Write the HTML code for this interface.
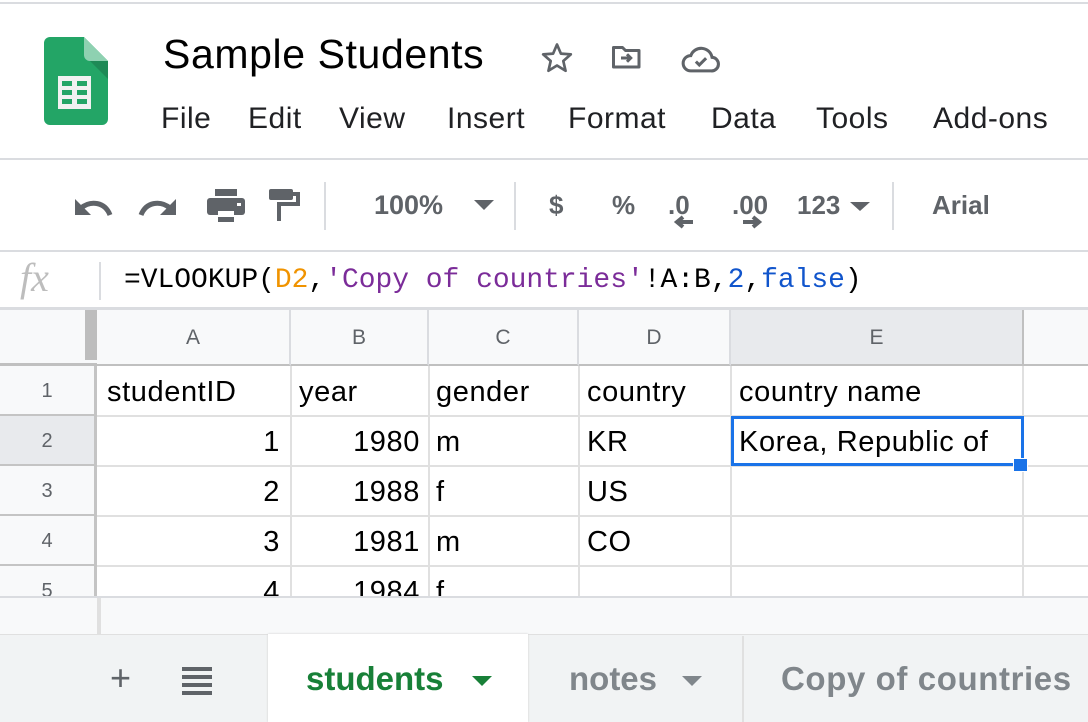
<!DOCTYPE html>
<html><head><meta charset="utf-8"><style>
*{margin:0;padding:0;box-sizing:border-box}
body{width:1088px;height:722px;overflow:hidden;background:#fff;font-family:"Liberation Sans",Arial,sans-serif;position:relative}
.a{position:absolute}
.menu span{position:absolute;top:102px;font-size:30px;letter-spacing:0.5px;color:#202124}
.tb{color:#5f6368;font-weight:bold;font-size:26px;position:absolute}
.ch{position:absolute;top:310px;height:56px;background:#f8f9fa;border-right:2px solid #dadce0;border-bottom:2px solid #c0c0c0;color:#5f6368;font-size:21px;text-align:center;line-height:56px}
.rh{position:absolute;left:0;width:97px;background:#f8f9fa;border-right:3px solid #c4c4c4;border-bottom:2px solid #c4c4c4;color:#5f6368;font-size:20px;text-align:center;line-height:50px}
.c{position:absolute;font-size:29px;letter-spacing:0.6px;color:#000;line-height:50px;white-space:nowrap}
.vl{position:absolute;top:366px;height:230px;width:2px;background:#e0e0e0}
.hl{position:absolute;left:97px;right:0;height:2px;background:#e0e0e0}
</style></head><body>
<div class="a" style="left:0;top:2px;width:1088px;height:2px;background:#dadce0"></div>
<svg class="a" style="left:44px;top:37px" width="64" height="88" viewBox="0 0 64 88">
<path d="M6 0H40L64 24V82a6 6 0 0 1-6 6H6a6 6 0 0 1-6-6V6a6 6 0 0 1 6-6z" fill="#23a566"/>
<path d="M40 0L64 24H46a6 6 0 0 1-6-6z" fill="#8ed1b1"/>
<path d="M46 24L64 42V24z" fill="#1e8a56"/>
<rect x="14" y="39" width="33" height="33" fill="#f1f1f1"/>
<g fill="#23a566"><rect x="18" y="44" width="10" height="5"/><rect x="33" y="44" width="10" height="5"/><rect x="18" y="53" width="10" height="5"/><rect x="33" y="53" width="10" height="5"/><rect x="18" y="62" width="10" height="5"/><rect x="33" y="62" width="10" height="5"/></g>
</svg>
<div class="a" style="left:163px;top:31px;font-size:41px;letter-spacing:0.6px;color:#000">Sample Students</div>
<svg class="a" style="left:537px;top:40px" width="40" height="36" viewBox="0 0 24 24"><path d="M12 3l2.6 6.1 6.6.5-5 4.4 1.5 6.5L12 17l-5.7 3.5 1.5-6.5-5-4.4 6.6-.5z" fill="none" stroke="#5f6368" stroke-width="1.8" stroke-linejoin="round"/></svg>
<svg class="a" style="left:607px;top:40px" width="40" height="36" viewBox="0 0 24 24"><path d="M3 5h6l2 2h9v11H3z" fill="none" stroke="#5f6368" stroke-width="2" stroke-linejoin="round"/><path d="M8 12h6M12 9.5l2.5 2.5-2.5 2.5" fill="none" stroke="#5f6368" stroke-width="2"/></svg>
<svg class="a" style="left:680px;top:42px" width="42" height="34" viewBox="0 0 24 20"><path d="M6 17h12a4 4 0 0 0 .5-8A6.5 6.5 0 0 0 6 8a4.5 4.5 0 0 0 0 9z" fill="none" stroke="#5f6368" stroke-width="1.8"/><path d="M9 11.5l2 2 4-4" fill="none" stroke="#5f6368" stroke-width="1.8"/></svg>
<div class="menu"><span style="left:161px">File</span><span style="left:248px">Edit</span><span style="left:339px">View</span><span style="left:447px">Insert</span><span style="left:568px">Format</span><span style="left:711px">Data</span><span style="left:816px">Tools</span><span style="left:933px">Add-ons</span></div>
<div class="a" style="left:0;top:158px;width:1088px;height:2px;background:#dadce0"></div>
<svg class="a" style="left:73px;top:190px" width="40" height="30" viewBox="0 0 40 30"><path d="M37 25C32 12 18 10 8 18" fill="none" stroke="#5f6368" stroke-width="5"/><path d="M2 9v16h16z" fill="#5f6368"/></svg>
<svg class="a" style="left:138px;top:190px" width="40" height="30" viewBox="0 0 40 30"><path d="M3 25C8 12 22 10 32 18" fill="none" stroke="#5f6368" stroke-width="5"/><path d="M38 9v16H22z" fill="#5f6368"/></svg>
<svg class="a" style="left:207px;top:188px" width="40" height="36" viewBox="0 0 40 36"><rect x="8" y="1" width="22" height="7" fill="#5f6368"/><rect x="0" y="10" width="38" height="17" rx="3" fill="#5f6368"/><rect x="11" y="21" width="16" height="12" fill="#fff"/><rect x="9" y="20" width="20" height="3" fill="#5f6368"/><rect x="11" y="29" width="16" height="5" fill="#5f6368"/><rect x="30" y="15" width="4" height="3" fill="#fff"/></svg>
<svg class="a" style="left:268px;top:188px" width="34" height="36" viewBox="0 0 34 36"><rect x="1" y="1" width="24" height="11" rx="2" fill="#5f6368"/><path d="M25 6h5v10H11v17" fill="none" stroke="#5f6368" stroke-width="4"/></svg>
<div class="a" style="left:324px;top:182px;width:2px;height:48px;background:#dadce0"></div>
<div class="tb" style="left:374px;top:190px;font-size:27px">100%</div>
<svg class="a" style="left:474px;top:200px" width="20" height="12"><path d="M0 0h20L10 10z" fill="#5f6368"/></svg>
<div class="a" style="left:514px;top:182px;width:2px;height:48px;background:#dadce0"></div>
<div class="tb" style="left:549px;top:190px">$</div>
<div class="tb" style="left:612px;top:190px">%</div>
<div class="tb" style="left:668px;top:190px">.0</div>
<svg class="a" style="left:673px;top:215px" width="22" height="14"><path d="M20 7H6M10 2L4 7l6 5" fill="none" stroke="#5f6368" stroke-width="4"/></svg>
<div class="tb" style="left:732px;top:190px">.00</div>
<svg class="a" style="left:741px;top:215px" width="22" height="14"><path d="M2 7h14M12 2l6 5-6 5" fill="none" stroke="#5f6368" stroke-width="4"/></svg>
<div class="tb" style="left:797px;top:190px">123</div>
<svg class="a" style="left:850px;top:202px" width="20" height="10"><path d="M0 0h20L10 9z" fill="#5f6368"/></svg>
<div class="a" style="left:892px;top:182px;width:2px;height:48px;background:#dadce0"></div>
<div class="tb" style="left:932px;top:190px">Arial</div>
<div class="a" style="left:0;top:250px;width:1088px;height:2px;background:#dadce0"></div>
<div class="a" style="left:20px;top:254px;font-family:'Liberation Serif',serif;font-style:italic;font-size:40px;color:#bdbdbd">fx</div>
<div class="a" style="left:99px;top:262px;width:2px;height:38px;background:#dadce0"></div>
<div class="a" style="left:124px;top:265px;font-family:'Liberation Mono',monospace;font-size:27.95px;color:#000;white-space:nowrap">=VLOOKUP(<span style="color:#f09300">D2</span>,<span style="color:#7b2c99">'Copy of countries'</span>!A:B,<span style="color:#1155cc">2</span>,<span style="color:#1155cc">false</span>)</div>
<div class="a" style="left:0;top:307px;width:1088px;height:3px;background:#dadce0"></div>
<div class="a" style="left:0;top:310px;width:97px;height:56px;background:#f8f9fa;border-bottom:3px solid #c0c0c0"></div>
<div class="a" style="left:85px;top:310px;width:12px;height:50px;background:#bdbdbd"></div>
<div class="ch" style="left:97px;width:194px">A</div>
<div class="ch" style="left:291px;width:138px">B</div>
<div class="ch" style="left:429px;width:150px">C</div>
<div class="ch" style="left:579px;width:152px">D</div>
<div class="ch" style="left:731px;width:293px;background:#e8eaed;border-right-color:#c0c0c0">E</div>
<div class="ch" style="left:1024px;width:64px;border-right:none"></div>
<div class="vl" style="left:290px"></div><div class="vl" style="left:428px"></div><div class="vl" style="left:578px"></div><div class="vl" style="left:730px"></div><div class="vl" style="left:1022px"></div>
<div class="hl" style="top:415px"></div><div class="hl" style="top:465px"></div><div class="hl" style="top:515px"></div><div class="hl" style="top:565px"></div>
<div class="rh" style="top:366px;height:50px">1</div>
<div class="rh" style="top:416px;height:50px;background:#e8eaed">2</div>
<div class="rh" style="top:466px;height:50px">3</div>
<div class="rh" style="top:516px;height:50px">4</div>
<div class="rh" style="top:566px;height:30px;border-bottom:none;line-height:50px;overflow:hidden">5</div>
<div class="c" style="left:107px;top:367px">studentID</div>
<div class="c" style="left:299px;top:367px">year</div>
<div class="c" style="left:436px;top:367px">gender</div>
<div class="c" style="left:587px;top:367px">country</div>
<div class="c" style="left:739px;top:367px">country name</div>
<div class="c" style="right:808px;top:417px">1</div><div class="c" style="right:668px;top:417px">1980</div><div class="c" style="left:436px;top:417px">m</div><div class="c" style="left:587px;top:417px">KR</div>
<div class="c" style="right:808px;top:467px">2</div><div class="c" style="right:668px;top:467px">1988</div><div class="c" style="left:436px;top:467px">f</div><div class="c" style="left:587px;top:467px">US</div>
<div class="c" style="right:808px;top:517px">3</div><div class="c" style="right:668px;top:517px">1981</div><div class="c" style="left:436px;top:517px">m</div><div class="c" style="left:587px;top:517px">CO</div>
<div class="a" style="left:97px;top:566px;width:991px;height:30px;overflow:hidden"><div class="c" style="right:808px;top:1px">4</div><div class="c" style="right:668px;top:1px">1984</div><div class="c" style="left:339px;top:1px">f</div></div>
<div class="c" style="left:739px;top:417px">Korea, Republic of</div>
<div class="a" style="left:731px;top:416px;width:293px;height:50px;border:3px solid #1a73e8"></div>
<div class="a" style="left:1013px;top:458px;width:15px;height:14px;background:#1a73e8;border:1px solid #fff"></div>
<div class="a" style="left:0;top:596px;width:1088px;height:38px;background:#f8f9fa;border-top:2px solid #dadce0"></div>
<div class="a" style="left:97px;top:598px;width:4px;height:36px;background:#e0e0e0"></div>
<div class="a" style="left:0;top:634px;width:1088px;height:88px;background:#f1f3f4;border-top:1px solid #e0e0e0"></div>
<div class="a" style="left:110px;top:657px;font-size:36px;color:#5f6368">+</div>
<svg class="a" style="left:182px;top:667px" width="30" height="28"><g fill="#5f6368"><rect y="0" width="30" height="4"/><rect y="8" width="30" height="4"/><rect y="16" width="30" height="4"/><rect y="24" width="30" height="4"/></g></svg>
<div class="a" style="left:268px;top:634px;width:260px;height:88px;background:#fff;box-shadow:0 0 2px #ccc"></div>
<div class="a" style="left:306px;top:660px;font-size:33px;font-weight:bold;color:#188038">students</div>
<svg class="a" style="left:472px;top:676px" width="20" height="10"><path d="M0 0h20L10 10z" fill="#188038"/></svg>
<div class="a" style="left:569px;top:660px;font-size:33px;font-weight:bold;color:#80868b">notes</div>
<svg class="a" style="left:682px;top:676px" width="20" height="10"><path d="M0 0h20L10 10z" fill="#80868b"/></svg>
<div class="a" style="left:742px;top:636px;width:2px;height:86px;background:#e0e0e0"></div>
<div class="a" style="left:781px;top:660px;font-size:33px;letter-spacing:0.6px;font-weight:bold;color:#80868b;white-space:nowrap">Copy of countries</div>
</body></html>
